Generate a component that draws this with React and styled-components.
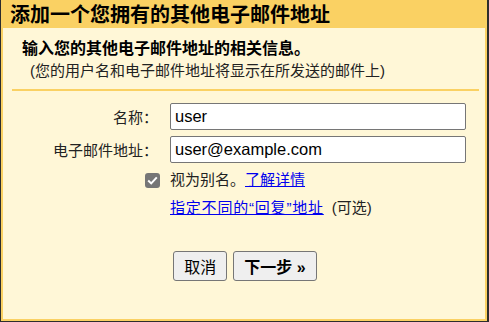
import styled, { createGlobalStyle } from 'styled-components'
import { useState } from 'react'

const GlobalStyle = createGlobalStyle`
  html, body {
    margin: 0;
    padding: 0;
    background: #2d2d2d;
    height: 322px;
    overflow: hidden;
  }
  body {
    font-family: "Liberation Sans", "Noto Sans CJK SC", sans-serif;
    color: #222;
  }
`

const Dialog = styled.div`
  box-sizing: border-box;
  margin-left: 1px;
  width: 486px;
  height: 321px;
  border: 2px solid #fad163;
  border-top: none;
  background: #fff7d7;
  display: flex;
  flex-direction: column;
`

const Header = styled.div`
  height: 28px;
  line-height: 28px;
  background: #fad163;
  padding-left: 7px;
  font-family: "Noto Sans CJK SC", sans-serif;
  font-size: 20px;
  font-weight: bold;
  color: #000;
`

const Intro = styled.div`
  margin: 10px 6px 0 9px;
  padding: 0 0 7px 10px;
  border-bottom: 2px solid #fad163;
  font-family: "Liberation Sans", "Noto Sans CJK SC", sans-serif;
`

const IntroTitle = styled.div`
  font-size: 16px;
  font-weight: bold;
  color: #000;
  line-height: 22px;
`

const IntroNote = styled.div`
  font-size: 15px;
  line-height: 22px;
  padding-left: 8px;
  color: #222;
`

const Form = styled.div`
  display: grid;
  grid-template-columns: 155px 296px;
  column-gap: 12px;
  row-gap: 6px;
  margin-top: 12px;
  align-items: center;
`

const Label = styled.label`
  justify-self: end;
  font-family: "Noto Sans CJK SC", sans-serif;
  font-size: 15px;
  color: #222;
`

const Input = styled.input`
  box-sizing: border-box;
  width: 296px;
  height: 27px;
  margin: 0;
  padding: 0 4px;
  border: 1px solid #767676;
  border-radius: 2px;
  background: #fff;
  font-family: "Liberation Sans", sans-serif;
  font-size: 16.5px;
  color: #000;
  outline: none;
`

const CheckCell = styled.div`
  justify-self: end;
  margin-right: -2px;
  display: flex;
`

const Check = styled.span`
  width: 15px;
  height: 15px;
  border-radius: 3px;
  background: #767676;
  display: flex;
  align-items: center;
  justify-content: center;
  cursor: pointer;
`

const Text = styled.div`
  font-family: "Liberation Sans", "Noto Sans CJK SC", sans-serif;
  font-size: 15px;
  color: #222;
  line-height: 22px;
  margin-top: ${({ $top }) => $top || 0}px;
`

const Link = styled.a`
  color: #0000ee;
  text-decoration: underline;
  cursor: pointer;
  letter-spacing: ${({ $spaced }) => ($spaced ? '0.8px' : '0')};
`

const Optional = styled.span`
  margin-left: 8px;
`

const Buttons = styled.div`
  display: flex;
  justify-content: center;
  gap: 6px;
  margin-top: 32px;
  padding-left: 2px;
`

const Button = styled.button`
  box-sizing: border-box;
  height: 30px;
  padding: 0 10px;
  border: 1px solid #767676;
  border-radius: 3px;
  background: #efefef;
  font-family: "Liberation Sans", "Noto Sans CJK SC", sans-serif;
  font-size: 16px;
  font-weight: ${({ $primary }) => ($primary ? 'bold' : 'normal')};
  color: #000;
`

const App = () => {
  const [name, setName] = useState('user')
  const [email, setEmail] = useState('user@example.com')
  const [alias, setAlias] = useState(true)

  return (
    <>
      <GlobalStyle />
      <Dialog>
        <Header>添加一个您拥有的其他电子邮件地址</Header>
        <Intro>
          <IntroTitle>输入您的其他电子邮件地址的相关信息。</IntroTitle>
          <IntroNote>(您的用户名和电子邮件地址将显示在所发送的邮件上)</IntroNote>
        </Intro>
        <Form>
          <Label>名称：</Label>
          <Input value={name} onChange={(e) => setName(e.target.value)} />
          <Label>电子邮件地址：</Label>
          <Input value={email} onChange={(e) => setEmail(e.target.value)} />
          <CheckCell>
            <Check onClick={() => setAlias(!alias)}>
              {alias && (
                <svg width="11" height="9" viewBox="0 0 11 9">
                  <path d="M1.2 4.6 L4.2 7.4 L9.8 1.4" fill="none" stroke="#fff" strokeWidth="2" />
                </svg>
              )}
            </Check>
          </CheckCell>
          <Text>
            视为别名。<Link>了解详情</Link>
          </Text>
          <span />
          <Text>
            <Link $spaced>指定不同的“回复”地址</Link>
            <Optional>(可选)</Optional>
          </Text>
        </Form>
        <Buttons>
          <Button>取消</Button>
          <Button $primary>下一步 »</Button>
        </Buttons>
      </Dialog>
    </>
  )
}

export default App
